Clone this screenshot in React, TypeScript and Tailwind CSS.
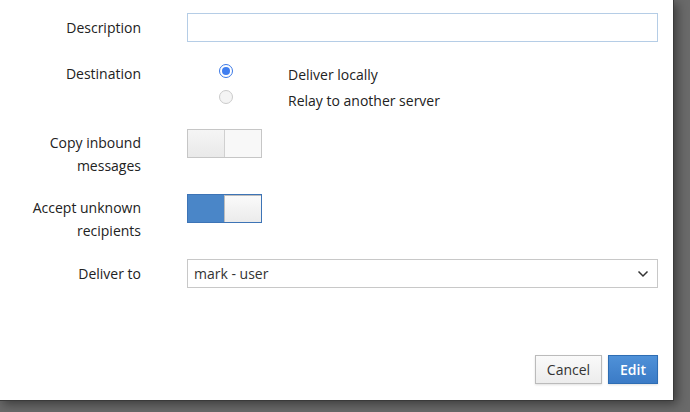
import React from 'react';

function Toggle({ on }: { on: boolean }) {
    return (
        <div
            className={`flex w-[75px] h-[29px] border ${on ? 'border-[#3d74b6]' : 'border-[#c6c6c6]'}`}
        >
            {on ? (
                <>
                    <div className="w-[36px] h-full bg-[#4a86c8]" />
                    <div className="flex-1 h-full bg-gradient-to-b from-[#fafafa] to-[#ebebeb] border-l border-t border-[#bdbdbd]" />
                </>
            ) : (
                <>
                    <div className="w-[37px] h-full bg-gradient-to-b from-[#f5f5f5] to-[#e9e9e9] border-r border-[#d0d0d0]" />
                    <div className="flex-1 h-full bg-[#f8f8f8]" />
                </>
            )}
        </div>
    );
}

function Radio({ checked }: { checked: boolean }) {
    return checked ? (
        <div className="w-[14px] h-[14px] rounded-full border-[1.5px] border-[#3a78e6] bg-white flex items-center justify-center">
            <div className="w-[8px] h-[8px] rounded-full bg-[#3f7ef0]" />
        </div>
    ) : (
        <div className="w-[14px] h-[14px] rounded-full border border-[#cbcbcb] bg-[#f4f4f4]" />
    );
}

export default function App() {
    return (
        <div
            className="w-[690px] h-[412px] bg-[#6a6a6a] overflow-hidden text-[14px] text-[#222]"
            style={{ fontFamily: '"Open Sans", "Noto Sans", sans-serif' }}
        >
            <div className="w-[674px] h-[401px] bg-white border-b border-r border-[#3a3a3a] shadow-[3px_3px_10px_rgba(0,0,0,0.45)] flex flex-col pt-[13px]">
                {/* Description */}
                <div className="flex items-center">
                    <label className="w-[141px] text-right">Description</label>
                    <input className="ml-[46px] w-[471px] h-[29px] border border-[#b5cde6] outline-none px-2" />
                </div>

                {/* Destination */}
                <div className="flex mt-[22px]">
                    <div className="w-[141px] text-right leading-[20px]">Destination</div>
                    <div className="ml-[46px] flex flex-col gap-[6px]">
                        <div className="flex items-center h-[20px]">
                            <div className="w-[101px] pl-[32px] -mt-[7px]">
                                <Radio checked />
                            </div>
                            <span>Deliver locally</span>
                        </div>
                        <div className="flex items-center h-[20px]">
                            <div className="w-[101px] pl-[32px] -mt-[7px]">
                                <Radio checked={false} />
                            </div>
                            <span>Relay to another server</span>
                        </div>
                    </div>
                </div>

                {/* Copy inbound */}
                <div className="flex mt-[19px]">
                    <div className="w-[141px] text-right leading-[23px] pt-[2px]">
                        Copy inbound
                        <br />
                        messages
                    </div>
                    <div className="ml-[46px]">
                        <Toggle on={false} />
                    </div>
                </div>

                {/* Accept unknown */}
                <div className="flex mt-[17px]">
                    <div className="w-[141px] text-right leading-[23px] pt-[2px]">
                        Accept unknown
                        <br />
                        recipients
                    </div>
                    <div className="ml-[46px]">
                        <Toggle on />
                    </div>
                </div>

                {/* Deliver to */}
                <div className="flex items-center mt-[17px]">
                    <label className="w-[141px] text-right">Deliver to</label>
                    <div className="ml-[46px] w-[471px] h-[29px] border border-[#c8c8c8] flex items-center justify-between pl-[6px] pr-[8px]">
                        <span className="text-[#333]">mark - user</span>
                        <svg width="12" height="8" viewBox="0 0 12 8" fill="none" stroke="#333" strokeWidth="1.5">
                            <path d="M1.5 1.5 L6 6 L10.5 1.5" />
                        </svg>
                    </div>
                </div>

                {/* Footer */}
                <div className="flex justify-end gap-[6px] mt-auto mb-[16px] mr-[15px]">
                    <button className="h-[29px] w-[67px] border border-[#bbbbbb] bg-gradient-to-b from-[#fafafa] to-[#ececec] text-[#333] shadow-[0_1px_2px_rgba(0,0,0,0.12)]">
                        Cancel
                    </button>
                    <button className="h-[29px] w-[50px] border border-[#2e6db3] bg-gradient-to-b from-[#4f91d8] to-[#3b7bc6] text-white font-semibold shadow-[0_1px_2px_rgba(0,0,0,0.12)]">
                        Edit
                    </button>
                </div>
            </div>
        </div>
    );
}
